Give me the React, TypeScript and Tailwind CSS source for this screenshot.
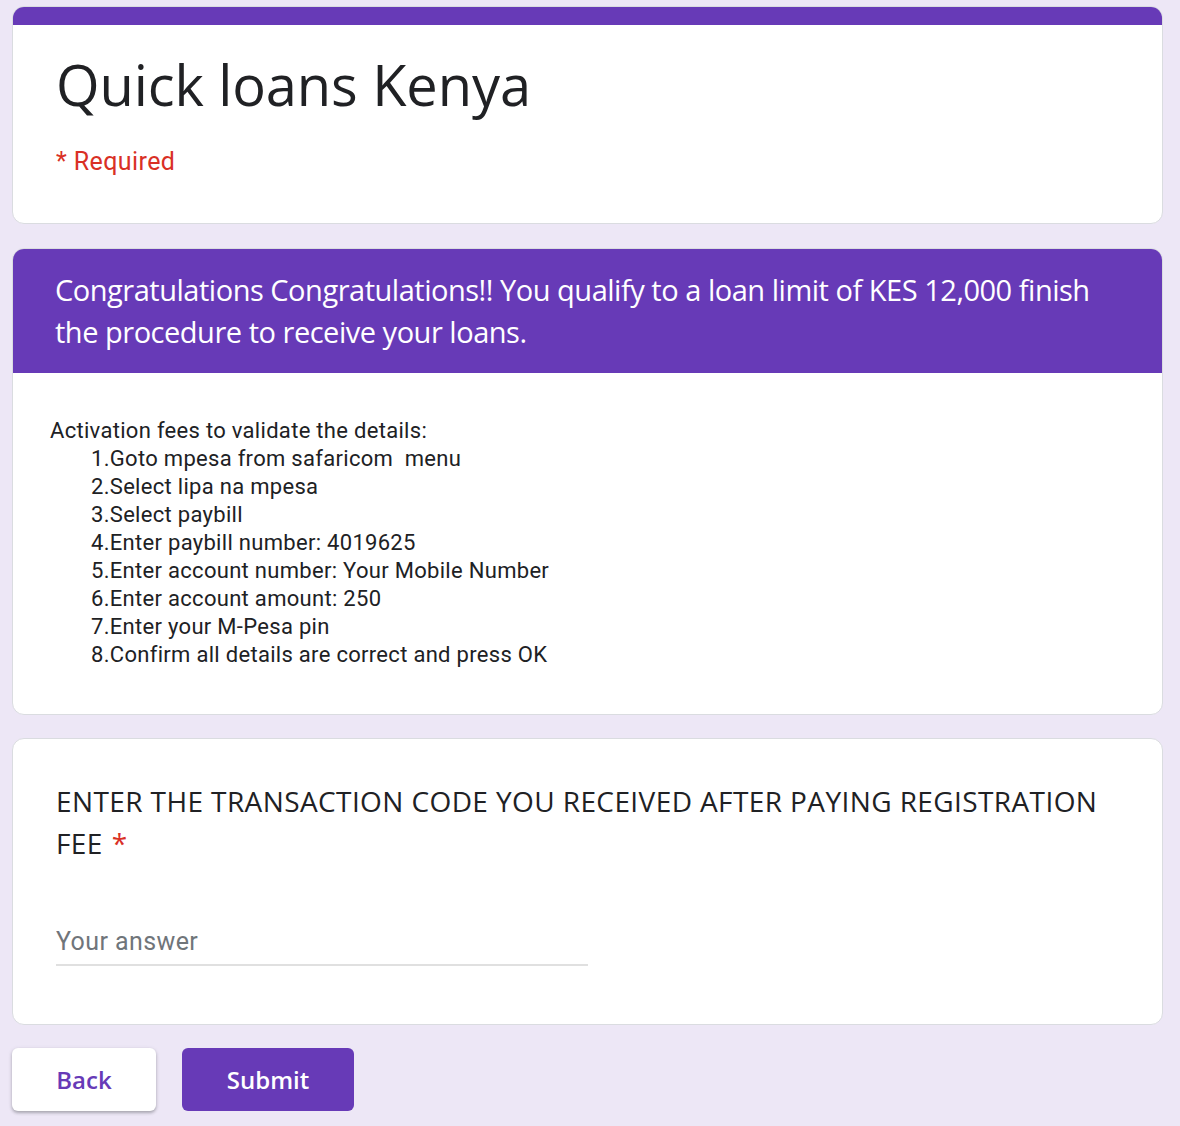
import React from "react";

const steps = [
  "1.Goto mpesa from safaricom\u00a0 menu",
  "2.Select lipa na mpesa",
  "3.Select paybill",
  "4.Enter paybill number: 4019625",
  "5.Enter account number: Your Mobile Number",
  "6.Enter account amount: 250",
  "7.Enter your M-Pesa pin",
  "8.Confirm all details are correct and press OK",
];

export default function App() {
  return (
    <div className="min-h-[1126px] bg-[#ede7f6] pt-[6px] px-[12px] pr-[17px] pb-4 font-['Roboto',sans-serif]">
      <div className="flex flex-col">
        {/* header card */}
        <div className="bg-white rounded-[12px] border border-[#dadce0] overflow-hidden">
          <div className="h-[18px] bg-[#673ab7]" />
          <div className="px-[43px] pt-[24px] pb-[47px]">
            <h1 className="text-[56px] leading-[70px] text-[#202124] font-['Open_Sans',sans-serif] tracking-[-0.1px]">
              Quick loans Kenya
            </h1>
            <p className="mt-[29px] text-[25px] leading-[28px] text-[#d93025] tracking-[0.4px]">* Required</p>
          </div>
        </div>

        {/* section card */}
        <div className="mt-[24px] bg-white rounded-[12px] border border-[#dadce0] overflow-hidden">
          <div className="bg-[#673ab7] px-[42px] pt-[20px] pb-[20px]">
            <p className="text-[29px] leading-[42px] text-white font-['Open_Sans',sans-serif] tracking-[-0.48px]">
              Congratulations Congratulations!! You qualify to a loan limit of KES 12,000 finish the procedure to receive your loans.
            </p>
          </div>
          <div className="px-[37px] pt-[44px] pb-[45px] text-[22px] leading-[28px] text-[#202124] tracking-[0.3px]">
            <p>Activation fees to validate the details:</p>
            <div className="pl-[41px]">
              {steps.map((s) => (
                <p key={s}>{s}</p>
              ))}
            </div>
          </div>
        </div>

        {/* question card */}
        <div className="mt-[23px] bg-white rounded-[12px] border border-[#dadce0] px-[43px] pt-[41px] pb-[58px]">
          <p className="text-[28px] leading-[42px] text-[#202124] font-['Open_Sans',sans-serif] tracking-[0.4px]">
            ENTER THE TRANSACTION CODE YOU RECEIVED AFTER PAYING REGISTRATION FEE
            <span className="ml-[9px] text-[#d93025]">*</span>
          </p>
          <div className="mt-[62px] w-[532px] border-b-2 border-[#e0e0e0] pb-[6px]">
            <input
              className="w-full text-[25px] leading-[32px] tracking-[0.4px] text-[#202124] placeholder:text-[#70757a] outline-none bg-transparent"
              placeholder="Your answer"
            />
          </div>
        </div>
      </div>

      {/* buttons */}
      <div className="mt-[23px] flex gap-[26px]">
        <button className="w-[144px] h-[63px] rounded-[6px] bg-white text-[#673ab7] text-[24px] font-semibold font-['Open_Sans',sans-serif] shadow-[0_2px_3px_rgba(60,64,67,0.3),0_1px_4px_rgba(60,64,67,0.15)]">
          Back
        </button>
        <button className="w-[172px] h-[63px] rounded-[6px] bg-[#673ab7] text-white text-[24px] font-semibold font-['Open_Sans',sans-serif]">
          Submit
        </button>
      </div>
    </div>
  );
}
